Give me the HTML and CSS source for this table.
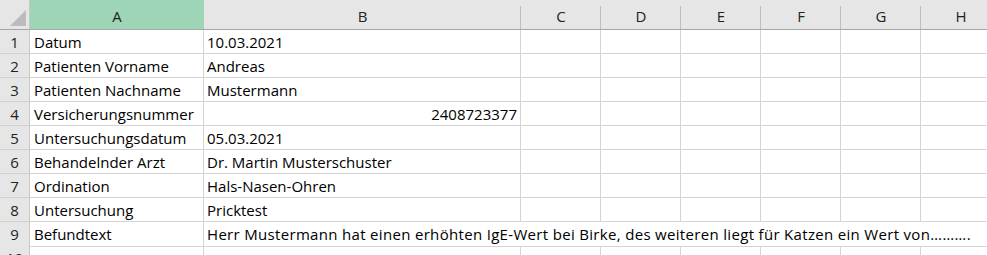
FILE: index.html
```html
<!DOCTYPE html>
<html lang="de">
<head>
<meta charset="utf-8">
<link rel="stylesheet" href="styles.css">
<title>Sheet</title>
</head>
<body>
<div class="sheet">
  <div class="row head">
    <div class="cell corner"><svg class="tri" width="29" height="29" viewBox="0 0 29 29"><polygon points="10,26 26,10 26,26" fill="#bcbcbc"/></svg></div>
    <div class="cell colh a sel">A</div>
    <div class="cell colh b">B</div>
    <div class="cell colh c">C</div>
    <div class="cell colh c">D</div>
    <div class="cell colh c">E</div>
    <div class="cell colh c">F</div>
    <div class="cell colh c">G</div>
    <div class="cell colh c">H</div>
  </div>
  <div class="row"><div class="cell rn">1</div><div class="cell a">Datum</div><div class="cell b">10.03.2021</div><div class="cell c"></div><div class="cell c"></div><div class="cell c"></div><div class="cell c"></div><div class="cell c"></div><div class="cell c"></div></div>
  <div class="row"><div class="cell rn">2</div><div class="cell a">Patienten Vorname</div><div class="cell b">Andreas</div><div class="cell c"></div><div class="cell c"></div><div class="cell c"></div><div class="cell c"></div><div class="cell c"></div><div class="cell c"></div></div>
  <div class="row"><div class="cell rn">3</div><div class="cell a">Patienten Nachname</div><div class="cell b">Mustermann</div><div class="cell c"></div><div class="cell c"></div><div class="cell c"></div><div class="cell c"></div><div class="cell c"></div><div class="cell c"></div></div>
  <div class="row"><div class="cell rn">4</div><div class="cell a">Versicherungsnummer</div><div class="cell b num">2408723377</div><div class="cell c"></div><div class="cell c"></div><div class="cell c"></div><div class="cell c"></div><div class="cell c"></div><div class="cell c"></div></div>
  <div class="row"><div class="cell rn">5</div><div class="cell a">Untersuchungsdatum</div><div class="cell b">05.03.2021</div><div class="cell c"></div><div class="cell c"></div><div class="cell c"></div><div class="cell c"></div><div class="cell c"></div><div class="cell c"></div></div>
  <div class="row"><div class="cell rn">6</div><div class="cell a">Behandelnder Arzt</div><div class="cell b">Dr. Martin Musterschuster</div><div class="cell c"></div><div class="cell c"></div><div class="cell c"></div><div class="cell c"></div><div class="cell c"></div><div class="cell c"></div></div>
  <div class="row"><div class="cell rn">7</div><div class="cell a">Ordination</div><div class="cell b">Hals-Nasen-Ohren</div><div class="cell c"></div><div class="cell c"></div><div class="cell c"></div><div class="cell c"></div><div class="cell c"></div><div class="cell c"></div></div>
  <div class="row"><div class="cell rn">8</div><div class="cell a">Untersuchung</div><div class="cell b">Pricktest</div><div class="cell c"></div><div class="cell c"></div><div class="cell c"></div><div class="cell c"></div><div class="cell c"></div><div class="cell c"></div></div>
  <div class="row"><div class="cell rn">9</div><div class="cell a">Befundtext</div><div class="cell b span">Herr Mustermann hat einen erhöhten IgE-Wert bei Birke, des weiteren liegt für Katzen ein Wert von<span class="dots">……….</span></div></div>
  <div class="row"><div class="cell rn">10</div><div class="cell a"></div><div class="cell b"></div><div class="cell c"></div><div class="cell c"></div><div class="cell c"></div><div class="cell c"></div><div class="cell c"></div><div class="cell c"></div></div>
</div>
</body>
</html>
```
FILE: styles.css
```css
html, body {
  margin: 0;
  padding: 0;
  background: #ffffff;
  overflow: hidden;
}
.sheet {
  width: 1100px;
  font-family: "Open Sans", "Liberation Sans", sans-serif;
  font-size: 15px;
  color: #000;
}
.row {
  display: grid;
  grid-template-columns: 30px 174px 317px 80px 80px 80px 80px 80px 80px;
  height: 24px;
}
.row.head {
  height: 30px;
}
.cell {
  box-sizing: border-box;
  border-right: 1px solid #d4d4d4;
  border-bottom: 1px solid #d4d4d4;
  padding: 0 4px;
  line-height: 23px;
  padding-top: 1px;
  white-space: nowrap;
  overflow: hidden;
}
.cell.b {
  padding-left: 3px;
}
.cell.num {
  text-align: right;
  padding-right: 3px;
}
.cell.span {
  grid-column: 3 / span 7;
  overflow: visible;
  border-right: none;
  letter-spacing: 0.32px;
}
.dots {
  letter-spacing: 0.5px;
}
.rn {
  background: #e6e6e6;
  text-align: center;
  padding: 1px 0 0 0;
  color: #222;
  border-right: 1px solid #c8c8c8;
  border-bottom: 1px solid #d0d0d0;
}
.head .cell {
  background-color: #e6e6e6;
  border-right: none;
  border-bottom: 1px solid #a6a6a6;
  background-image: linear-gradient(#bdbdbd, #bdbdbd);
  background-repeat: no-repeat;
  background-position: right bottom;
  background-size: 1px 23px;
  text-align: center;
  color: #222;
  line-height: 26px;
  padding: 3px 0 0 0;
}
.head .corner {
  padding: 0;
  background-image: none;
  border-right: 1px solid #c8c8c8;
}
.tri {
  display: block;
}
.head .sel {
  background-color: #9fd5b7;
  background-image: none;
}
```
